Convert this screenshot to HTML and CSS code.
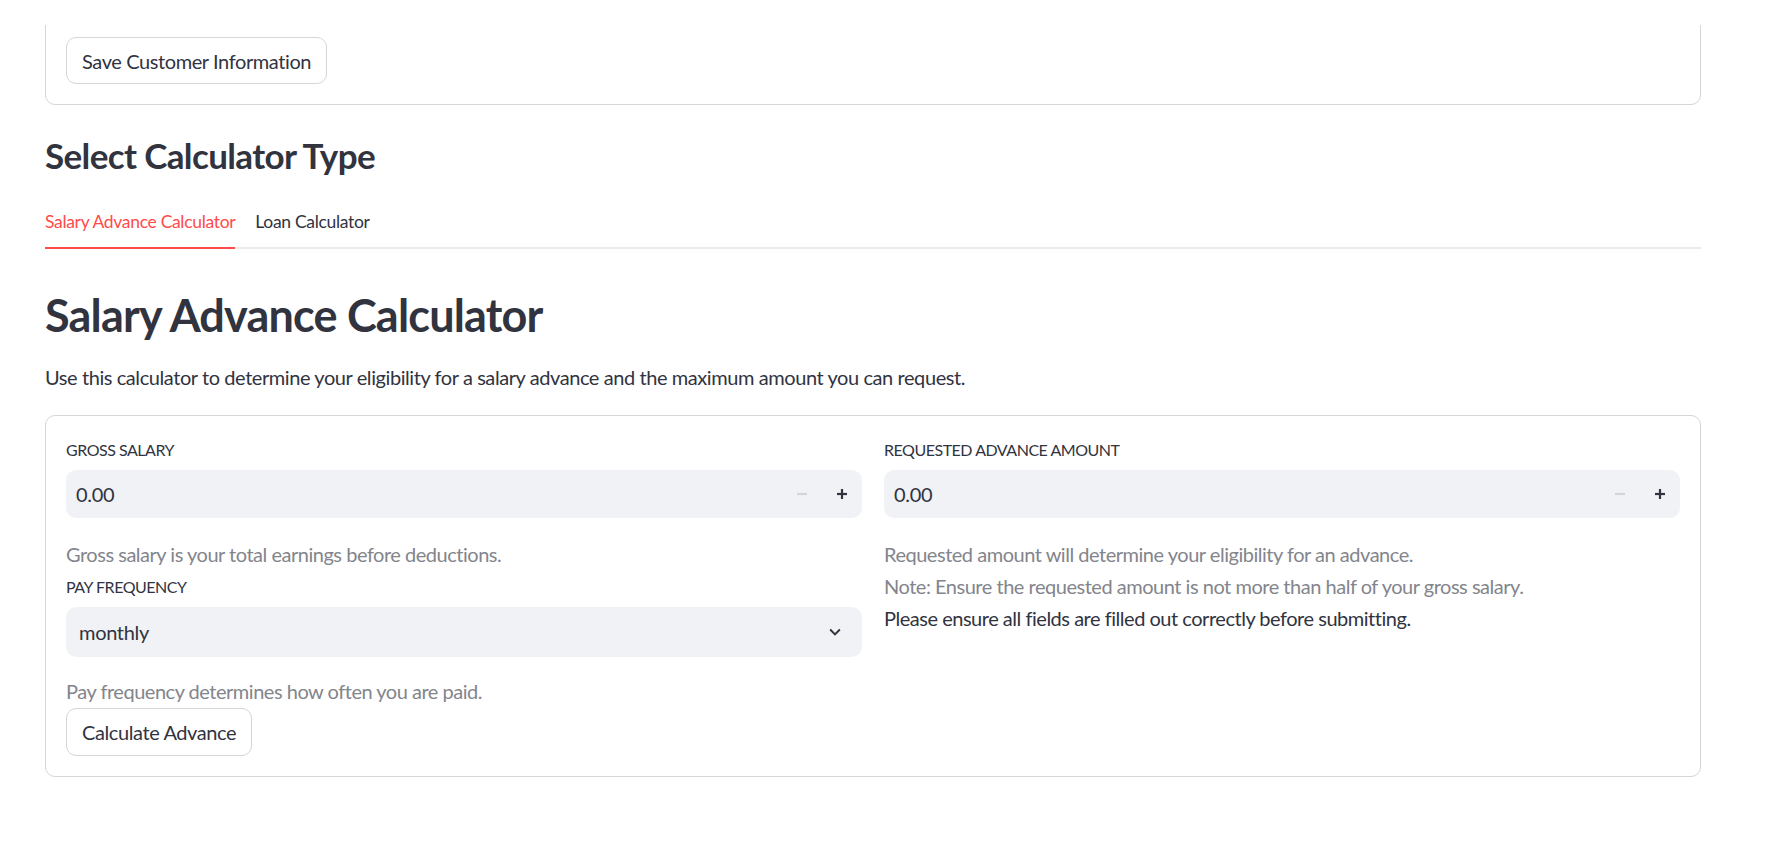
FILE: index.html
```html
<!DOCTYPE html>
<html lang="en">
<head>
<meta charset="utf-8">
<title>Salary Advance Calculator</title>
<link rel="stylesheet" href="styles.css">
</head>
<body>
<header class="app-header"></header>
<main class="main">
  <section class="card card-top">
    <button class="btn">Save Customer Information</button>
  </section>

  <h3 class="subheader">Select Calculator Type</h3>

  <div class="tabs">
    <div class="tab active">Salary Advance Calculator</div>
    <div class="tab">Loan Calculator</div>
  </div>

  <h2 class="header">Salary Advance Calculator</h2>
  <p class="intro">Use this calculator to determine your eligibility for a salary advance and the maximum amount you can request.</p>

  <section class="card form">
    <div class="col">
      <div class="label">GROSS SALARY</div>
      <div class="num-input">
        <span class="value">0.00</span>
        <div class="steps">
          <span class="step minus"><svg width="12" height="12" viewBox="0 0 12 12"><rect x="1" y="4.9" width="10" height="2.2" fill="currentColor"/></svg></span>
          <span class="step plus"><svg width="12" height="12" viewBox="0 0 12 12"><rect x="1" y="4.9" width="10" height="2.2" fill="currentColor"/><rect x="4.9" y="1" width="2.2" height="10" fill="currentColor"/></svg></span>
        </div>
      </div>
      <p class="caption first">Gross salary is your total earnings before deductions.</p>
      <div class="label label-gap">PAY FREQUENCY</div>
      <div class="select">
        <span class="value">monthly</span>
        <svg class="chev" width="22" height="22" viewBox="0 0 24 24"><path d="M7.41 8.59 12 13.17l4.59-4.58L18 10l-6 6-6-6z" fill="currentColor"/></svg>
      </div>
      <p class="caption after-select">Pay frequency determines how often you are paid.</p>
      <button class="btn btn-calc">Calculate Advance</button>
    </div>
    <div class="col">
      <div class="label">REQUESTED ADVANCE AMOUNT</div>
      <div class="num-input">
        <span class="value">0.00</span>
        <div class="steps">
          <span class="step minus"><svg width="12" height="12" viewBox="0 0 12 12"><rect x="1" y="4.9" width="10" height="2.2" fill="currentColor"/></svg></span>
          <span class="step plus"><svg width="12" height="12" viewBox="0 0 12 12"><rect x="1" y="4.9" width="10" height="2.2" fill="currentColor"/><rect x="4.9" y="1" width="2.2" height="10" fill="currentColor"/></svg></span>
        </div>
      </div>
      <p class="caption first">Requested amount will determine your eligibility for an advance.</p>
      <p class="caption">Note: Ensure the requested amount is not more than half of your gross salary.</p>
      <p class="caption dark">Please ensure all fields are filled out correctly before submitting.</p>
    </div>
  </section>
</main>
</body>
</html>
```

FILE: styles.css
```css
* { box-sizing: border-box; }

html, body {
  margin: 0;
  padding: 0;
  background: #ffffff;
}

body {
  font-family: Lato, "Noto Sans", sans-serif;
  color: #31333f;
  letter-spacing: -0.02em;
  height: 859px;
  overflow: hidden;
}

.app-header {
  position: fixed;
  top: 0;
  left: 0;
  right: 0;
  height: 25px;
  background: #ffffff;
  z-index: 10;
}

.main {
  width: 1656px;
  margin-left: 45px;
}

.card {
  border: 1px solid #d6d6d9;
  border-radius: 10px;
}

.card-top {
  padding: 36px 20px 20px;
}

.btn {
  display: inline-flex;
  align-items: center;
  justify-content: center;
  height: 47px;
  padding: 0 15px;
  border: 1px solid #d6d6d9;
  border-radius: 10px;
  background: #ffffff;
  color: #31333f;
  font-family: inherit;
  font-size: 20px;
  line-height: 24px;
  letter-spacing: -0.02em;
}

.subheader {
  margin: 29px 0 0;
  font-size: 35px;
  line-height: 42px;
  font-weight: 700;
  letter-spacing: -0.018em;
  color: #31333f;
}

.tabs {
  display: flex;
  gap: 20px;
  margin-top: 32px;
  border-bottom: 2px solid #ebebed;
}

.tab {
  font-size: 17.5px;
  line-height: 28px;
  padding-bottom: 11px;
  margin-bottom: -2px;
  border-bottom: 2px solid transparent;
  color: #31333f;
}

.tab.active {
  color: #ff4b4b;
  border-bottom-color: #ff4b4b;
}

.header {
  margin: 39px 0 0;
  font-size: 45px;
  line-height: 54px;
  font-weight: 700;
  letter-spacing: -0.018em;
  color: #31333f;
}

.intro {
  margin: 19px 0 0;
  font-size: 20px;
  line-height: 32px;
  letter-spacing: -0.021em;
}

.form {
  margin-top: 22px;
  padding: 20px;
  display: grid;
  grid-template-columns: 1fr 1fr;
  column-gap: 22px;
  align-items: start;
}

.col {
  display: flex;
  flex-direction: column;
  align-items: flex-start;
}

.label {
  font-size: 16px;
  line-height: 28px;
  letter-spacing: -0.03em;
  margin-bottom: 6px;
  color: #31333f;
}

.label-gap {
  margin-top: 3px;
}

.num-input,
.select {
  width: 100%;
  display: flex;
  align-items: center;
  background: #f0f2f6;
  border-radius: 10px;
  font-size: 20px;
  line-height: 24px;
  color: #31333f;
}

.num-input {
  height: 48px;
  padding-left: 10px;
}

.num-input .value {
  flex: 1;
}

.steps {
  display: flex;
  height: 100%;
}

.step {
  width: 40px;
  height: 100%;
  display: flex;
  align-items: center;
  justify-content: center;
}

.step.minus { color: #d3d5dc; }
.step.plus { color: #31333f; }

.select {
  height: 50px;
  padding-left: 13px;
  padding-right: 16px;
}

.select .value { flex: 1; }
.chev { color: #31333f; }

.caption {
  margin: 0;
  font-size: 20px;
  line-height: 32px;
  letter-spacing: -0.024em;
  color: #83858c;
}

.caption.first {
  margin-top: 20px;
}

.caption.after-select {
  margin-top: 18px;
}

.caption.dark {
  color: #31333f;
}

.btn-calc {
  height: 48px;
  margin-top: 1px;
}
```
